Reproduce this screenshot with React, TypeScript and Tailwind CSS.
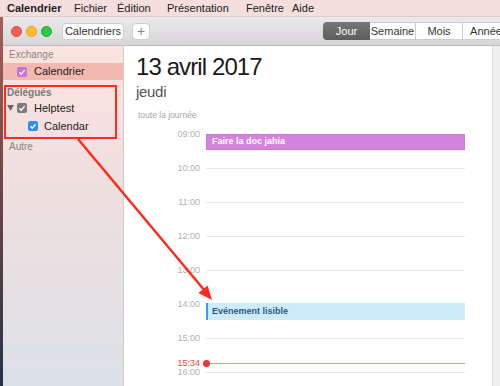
const font = { fontFamily: '"Liberation Sans", Arial, sans-serif' };

const hours = ["09:00", "10:00", "11:00", "12:00", "13:00", "14:00", "15:00", "16:00"];

function Check({ bg }: { bg: string }) {
  return (
    <span className={`flex h-[10px] w-[10px] shrink-0 items-center justify-center rounded-[2px] ${bg}`}>
      <svg width="8" height="8" viewBox="0 0 10 10">
        <path d="M1.8 5.4 L4.1 7.7 L8.3 2.6" fill="none" stroke="white" strokeWidth="1.7" />
      </svg>
    </span>
  );
}

function MenuBar() {
  return (
    <div className="flex h-[17px] shrink-0 items-center border-b border-[#e3c9c5] bg-[#f4dfdc] text-[11px] text-[#222]">
      <span className="ml-[7px] w-[67px] font-bold">Calendrier</span>
      <span className="w-[43px]">Fichier</span>
      <span className="w-[50px]">Édition</span>
      <span className="w-[79px]">Présentation</span>
      <span className="w-[46px]">Fenêtre</span>
      <span>Aide</span>
    </div>
  );
}

function Toolbar() {
  return (
    <div className="flex h-[29px] shrink-0 items-center overflow-hidden border-b border-[#bdbbbd] bg-linear-to-b from-[#ebe9eb] to-[#d8d6d8] pl-[8px]">
      <div className="flex shrink-0 gap-[4px]">
        <span className="h-[11px] w-[11px] rounded-full border border-[#e0443e] bg-[#fc5f57]" />
        <span className="h-[11px] w-[11px] rounded-full border border-[#dea123] bg-[#fdbc2e]" />
        <span className="h-[11px] w-[11px] rounded-full border border-[#1aab29] bg-[#33c748]" />
      </div>
      <button className="ml-[10px] flex h-[17px] w-[62px] shrink-0 items-center justify-center rounded-[4px] border border-[#cfcdcf] bg-white text-[11px] text-[#333]">
        Calendriers
      </button>
      <button className="ml-[8px] flex h-[17px] w-[18px] shrink-0 items-center justify-center rounded-[4px] border border-[#cfcdcf] bg-white text-[14px] leading-none text-[#888]">
        +
      </button>
      <div className="ml-[173px] flex h-[18px] shrink-0 text-[11px]">
        <div className="flex w-[47px] items-center justify-center rounded-l-[4px] bg-linear-to-b from-[#767676] to-[#5e5e5e] text-white">
          Jour
        </div>
        <div className="flex w-[46px] items-center justify-center border-y border-r border-[#cdcbcd] bg-white text-[#333]">
          Semaine
        </div>
        <div className="flex w-[47px] items-center justify-center border-y border-r border-[#cdcbcd] bg-white text-[#333]">
          Mois
        </div>
        <div className="flex w-[47px] items-center justify-center border-y border-r border-[#cdcbcd] bg-white text-[#333]">
          Année
        </div>
      </div>
    </div>
  );
}

function Sidebar() {
  return (
    <div className="flex w-[121px] shrink-0 flex-col border-r border-[#d3cccc] bg-linear-to-b from-[#fbe3df] via-[#ecdfdf] to-[#dce1e8] pt-[1px] text-[11px] text-[#222]">
      <div className="h-[16px] pl-[6px] text-[10px] leading-[16px] text-[#8a8585]">Exchange</div>
      <div className="flex h-[17px] items-center bg-[#f3b8b0] pl-[14px]">
        <Check bg="bg-[#c772d6]" />
        <span className="ml-[7px]">Calendrier</span>
      </div>
      <div className="ml-[1px] mt-[5px] w-[113px] border-2 border-[#ff2a1f] pb-[2px]">
        <div className="h-[12px] pl-[1px] text-[10px] font-bold leading-[12px] text-[#7d7777]">Délégués</div>
        <div className="flex h-[18px] items-center">
          <svg width="7" height="6" viewBox="0 0 7 6" className="ml-[1px]">
            <path d="M0 0 L7 0 L3.5 6 Z" fill="#666" />
          </svg>
          <span className="ml-[3px]">
            <Check bg="bg-[#7c7c7c]" />
          </span>
          <span className="ml-[7px]">Helptest</span>
        </div>
        <div className="flex h-[18px] items-center pl-[22px]">
          <Check bg="bg-[#2d8ff0]" />
          <span className="ml-[6px]">Calendar</span>
        </div>
      </div>
      <div className="mt-[1px] h-[14px] pl-[6px] text-[10px] leading-[14px] text-[#8a8585]">Autre</div>
    </div>
  );
}

function DayView() {
  return (
    <div className="flex min-w-0 flex-1 flex-col overflow-hidden bg-white pl-[12px] pr-[27px] pt-[6px]">
      <div className="text-[24px] leading-[29px] tracking-[-0.9px] text-[#1a1a1a]">13 avril 2017</div>
      <div className="mt-[2px] text-[15px] leading-[18px] tracking-[-0.3px] text-[#555]">jeudi</div>
      <div className="mt-[7px] h-px bg-[#e6e6e6]" />
      <div className="h-[14px] pl-[2px] text-[8.5px] leading-[14px] text-[#a5a5a5]">toute la journée</div>
      <div className="mt-[2px] h-[2px] bg-[#d6d6d6]" />
      <div className="relative pt-[10px]">
        {hours.map((h) => (
          <div key={h} className="flex h-[34px] items-start">
            <span className="w-[64px] -translate-y-1/2 text-right text-[9px] leading-[12px] text-[#b0b0b0]">{h}</span>
            <div className="ml-[6px] h-px flex-1 bg-[#e8e8e8]" />
          </div>
        ))}

        <div className="absolute left-[70px] right-0 top-[10px] flex h-[16px] items-center border border-[#c97ad3] bg-[#d383dc] pl-[5px] text-[9px] font-bold text-white">
          Faire la doc jahia
        </div>

        <div className="absolute left-[70px] right-0 top-[179px] flex h-[17px] items-center border-l-2 border-[#3a9be6] bg-[#cfeaf9] pl-[4px] text-[9px] font-bold text-[#1f5a8c]">
          Evénement lisible
        </div>

        <div className="absolute left-0 right-0 top-[233px] flex items-center">
          <span className="w-[64px] text-right text-[9px] leading-[12px] text-[#f2433a]">15:34</span>
          <div className="relative ml-[6px] h-px flex-1 bg-[#f58a84]">
            <span className="absolute -left-[3.5px] -top-[3px] h-[7px] w-[7px] rounded-full bg-[#f2303a]" />
          </div>
        </div>
      </div>
    </div>
  );
}

export default function App() {
  return (
    <div className="relative flex h-[386px] w-[500px] flex-col overflow-hidden bg-white" style={font}>
      <MenuBar />
      <div className="flex min-h-0 flex-1">
        <div className="w-[3px] shrink-0 bg-linear-to-b from-[#a85d55] via-[#6a4448] to-[#243247]" />
        <div className="flex min-w-0 flex-1 flex-col">
          <Toolbar />
          <div className="flex min-h-0 flex-1">
            <Sidebar />
            <DayView />
            <div className="w-[8px] shrink-0 border-l border-[#dcdcdc] bg-[#efefef]" />
          </div>
        </div>
      </div>

      <svg className="pointer-events-none absolute left-0 top-0" width="500" height="386">
        <line x1="78" y1="139" x2="205" y2="291" stroke="#ff2a1f" strokeWidth="2.5" />
        <polygon points="212,300 198.4,293.1 207.6,285.4" fill="#ff2a1f" />
      </svg>
    </div>
  );
}
